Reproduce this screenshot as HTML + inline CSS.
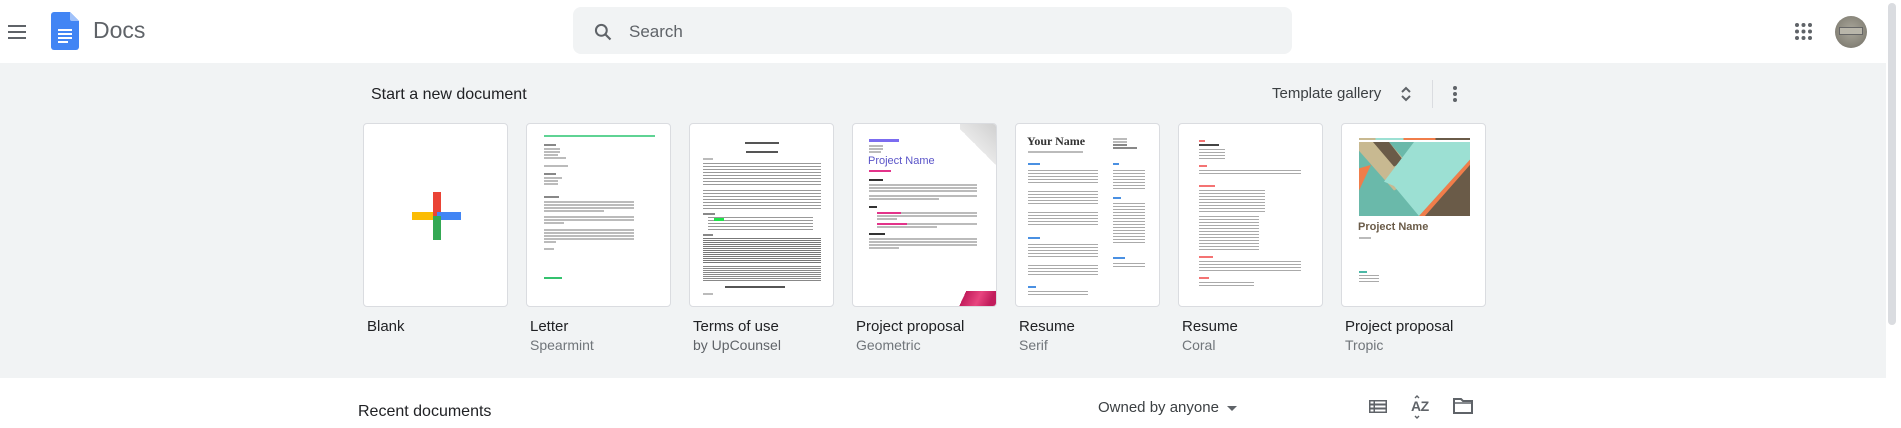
<!DOCTYPE html>
<html><head><meta charset="utf-8"><style>
*{margin:0;padding:0;box-sizing:border-box}
body{width:1901px;height:428px;overflow:hidden;background:#fff;font-family:"Liberation Sans",Arial,sans-serif;position:relative}
.a{position:absolute}
.gray{left:0;top:63px;width:1886px;height:315px;background:#f1f3f4}
.card{position:absolute;top:123px;width:145px;height:184px;background:#fff;border:1px solid #dadce0;border-radius:4px;overflow:hidden}
.t{position:absolute;top:318px;font-size:15px;color:#202124}
.s{position:absolute;top:337px;font-size:14px;color:#70757a}
.l{position:absolute;height:1.5px;background:#bbb}
.d{position:absolute;height:1.5px;background:#888}
</style></head><body>
<!-- header -->
<div class="a" style="left:8px;top:25px;width:18px;height:2px;background:#5f6368"></div>
<div class="a" style="left:8px;top:31px;width:18px;height:2px;background:#5f6368"></div>
<div class="a" style="left:8px;top:37px;width:18px;height:2px;background:#5f6368"></div>
<svg class="a" style="left:51px;top:12px" width="28" height="38" viewBox="0 0 28 38">
<path d="M3 0h16l9 9v26a3 3 0 0 1-3 3H3a3 3 0 0 1-3-3V3a3 3 0 0 1 3-3z" fill="#4285f4"/>
<path d="M19 0l9 9h-7a2 2 0 0 1-2-2z" fill="#a1c2fa"/>
<rect x="7" y="17" width="14" height="2" fill="#fff"/><rect x="7" y="21" width="14" height="2" fill="#fff"/><rect x="7" y="25" width="14" height="2" fill="#fff"/><rect x="7" y="29" width="10" height="2" fill="#fff"/>
</svg>
<div class="a" style="left:93px;top:17px;font-size:23px;color:#5f6368">Docs</div>
<div class="a" style="left:573px;top:7px;width:719px;height:47px;background:#f1f3f4;border-radius:8px"></div>
<svg class="a" style="left:593px;top:22px" width="20" height="20" viewBox="0 0 24 24"><circle cx="10" cy="10" r="6.5" fill="none" stroke="#5f6368" stroke-width="2.4"/><path d="M15 15l6 6" stroke="#5f6368" stroke-width="2.6"/></svg>
<div class="a" style="left:629px;top:22px;font-size:17px;color:#5f6368">Search</div>
<svg class="a" style="left:1795px;top:23px" width="17" height="17" viewBox="0 0 17 17" fill="#5f6368">
<circle cx="2" cy="2" r="2"/><circle cx="8.5" cy="2" r="2"/><circle cx="15" cy="2" r="2"/>
<circle cx="2" cy="8.5" r="2"/><circle cx="8.5" cy="8.5" r="2"/><circle cx="15" cy="8.5" r="2"/>
<circle cx="2" cy="15" r="2"/><circle cx="8.5" cy="15" r="2"/><circle cx="15" cy="15" r="2"/></svg>
<div class="a" style="left:1835px;top:16px;width:32px;height:32px;border-radius:50%;background:radial-gradient(circle at 50% 45%,#a9a69a,#8a877c 60%,#6e6b62)"></div>
<div class="a" style="left:1839px;top:27px;width:24px;height:8px;background:#b9b6aa;border:1px solid #666"></div>
<!-- gray section -->
<div class="a gray"></div>
<div class="a" style="left:1888px;top:3px;width:8px;height:322px;background:#dadce0;border-radius:4px"></div>
<div class="a" style="left:371px;top:86px;font-size:16px;color:#202124">Start a new document</div>
<div class="a" style="left:1272px;top:85px;font-size:15px;color:#3c4043">Template gallery</div>
<svg class="a" style="left:1400px;top:85px" width="12" height="18" viewBox="0 0 12 18"><path d="M2 7l4-4 4 4M2 11l4 4 4-4" fill="none" stroke="#5f6368" stroke-width="2"/></svg>
<div class="a" style="left:1432px;top:80px;width:1px;height:28px;background:#dadce0"></div>
<div class="a" style="left:1453px;top:86px;width:4px;height:4px;border-radius:50%;background:#5f6368;box-shadow:0 6px 0 #5f6368,0 12px 0 #5f6368"></div>

<!-- Blank -->
<div class="card" style="left:363px">
<div class="a" style="left:48px;top:88px;width:24px;height:8px;background:#fbbc04"></div>
<div class="a" style="left:69px;top:68px;width:8px;height:24px;background:#ea4335"></div>
<div class="a" style="left:73px;top:88px;width:24px;height:8px;background:#4285f4"></div>
<div class="a" style="left:69px;top:92px;width:8px;height:24px;background:#34a853"></div>
</div>
<!-- Letter -->
<div class="card" style="left:526px">
<div class="a" style="left:17px;top:11px;width:111px;height:2px;background:#5fd394"></div>
<div class="d" style="left:17px;top:20px;width:12px"></div>
<div class="l" style="left:17px;top:24px;width:16px"></div><div class="l" style="left:17px;top:27px;width:16px"></div><div class="l" style="left:17px;top:30px;width:14px"></div><div class="l" style="left:17px;top:33px;width:22px"></div>
<div class="l" style="left:17px;top:41px;width:24px"></div>
<div class="d" style="left:17px;top:49px;width:12px"></div>
<div class="l" style="left:17px;top:53px;width:18px"></div><div class="l" style="left:17px;top:56px;width:14px"></div><div class="l" style="left:17px;top:59px;width:14px"></div>
<div class="d" style="left:17px;top:72px;width:15px"></div>
<div class="l" style="left:17px;top:77px;width:90px"></div><div class="l" style="left:17px;top:80px;width:90px"></div><div class="l" style="left:17px;top:83px;width:90px"></div><div class="l" style="left:17px;top:86px;width:60px"></div>
<div class="l" style="left:17px;top:92px;width:90px"></div><div class="l" style="left:17px;top:95px;width:90px"></div><div class="l" style="left:17px;top:98px;width:20px"></div>
<div class="l" style="left:17px;top:105px;width:90px"></div><div class="l" style="left:17px;top:108px;width:90px"></div><div class="l" style="left:17px;top:111px;width:90px"></div><div class="l" style="left:17px;top:114px;width:90px"></div><div class="l" style="left:17px;top:117px;width:12px"></div>
<div class="l" style="left:17px;top:124px;width:10px"></div>
<div class="a" style="left:17px;top:153px;width:18px;height:2px;background:#34c26e"></div>
</div>
<!-- Terms -->
<div class="card" style="left:689px">
<div class="d" style="left:55px;top:18px;width:34px;background:#555"></div>
<div class="d" style="left:56px;top:27px;width:32px;background:#555"></div>
<div class="l" style="left:13px;top:34px;width:10px"></div>
<div class="a" style="left:13px;top:39px;width:118px;height:24px;background:repeating-linear-gradient(#999 0 1px,transparent 1px 3px)"></div>
<div class="a" style="left:13px;top:66px;width:118px;height:20px;background:repeating-linear-gradient(#999 0 1px,transparent 1px 3px)"></div>
<div class="d" style="left:13px;top:89px;width:12px"></div>
<div class="a" style="left:18px;top:93px;width:105px;height:13px;background:repeating-linear-gradient(#999 0 1px,transparent 1px 3px)"></div>
<div class="a" style="left:24px;top:94px;width:10px;height:3px;background:#1fe34a"></div>
<div class="d" style="left:13px;top:110px;width:10px"></div>
<div class="a" style="left:13px;top:114px;width:118px;height:26px;background:repeating-linear-gradient(#777 0 1px,transparent 1px 2px)"></div>
<div class="a" style="left:13px;top:142px;width:118px;height:16px;background:repeating-linear-gradient(#888 0 1px,transparent 1px 2px)"></div>
<div class="d" style="left:35px;top:162px;width:60px;background:#555"></div>
<div class="l" style="left:13px;top:169px;width:10px"></div>
</div>
<!-- Project proposal geometric -->
<div class="card" style="left:852px">
<div class="a" style="right:0;top:0;width:36px;height:46px;background:linear-gradient(225deg,#d0d0d0 0,#e8e8e8 50%,transparent 50%)"></div>
<div class="d" style="left:16px;top:15px;width:30px;height:2.5px;background:#7b6cf0"></div>
<div class="l" style="left:16px;top:21px;width:14px"></div><div class="l" style="left:16px;top:24px;width:14px"></div><div class="l" style="left:16px;top:27px;width:12px"></div>
<div class="a" style="left:15px;top:31px;font-size:11px;color:#5a54c8">Project Name</div>
<div class="l" style="left:16px;top:46px;width:22px;background:#e3338a"></div>
<div class="d" style="left:16px;top:55px;width:14px;background:#333"></div>
<div class="l" style="left:16px;top:60px;width:108px"></div><div class="l" style="left:16px;top:63px;width:108px"></div><div class="l" style="left:16px;top:66px;width:108px"></div>
<div class="l" style="left:16px;top:71px;width:108px"></div><div class="l" style="left:16px;top:74px;width:70px"></div>
<div class="d" style="left:16px;top:82px;width:8px;background:#333"></div>
<div class="l" style="left:24px;top:88px;width:100px"></div><div class="l" style="left:24px;top:91px;width:100px"></div><div class="l" style="left:24px;top:94px;width:20px"></div>
<div class="l" style="left:24px;top:99px;width:100px"></div><div class="l" style="left:24px;top:102px;width:60px"></div>
<div class="l" style="left:24px;top:88px;width:24px;background:#e3338a"></div><div class="l" style="left:24px;top:99px;width:30px;background:#e3338a"></div>
<div class="d" style="left:16px;top:109px;width:16px;background:#333"></div>
<div class="l" style="left:16px;top:114px;width:108px"></div><div class="l" style="left:16px;top:117px;width:108px"></div><div class="l" style="left:16px;top:120px;width:108px"></div><div class="l" style="left:16px;top:123px;width:30px"></div>
<div class="a" style="left:100px;top:167px;width:45px;height:17px;background:linear-gradient(115deg,transparent 25%,#c21d5c 25%,#e8457f 55%,#c21d5c 80%)"></div>
<div class="a" style="left:0;top:182px;width:145px;height:2px;background:#5a54c8"></div>
</div>
<!-- Resume Serif -->
<div class="card" style="left:1015px">
<div class="a" style="left:11px;top:10px;font-family:'Liberation Serif',serif;font-size:12px;font-weight:bold;color:#333">Your Name</div>
<div class="l" style="left:12px;top:27px;width:55px"></div>
<div class="l" style="left:97px;top:14px;width:14px"></div><div class="l" style="left:97px;top:17px;width:14px"></div><div class="d" style="left:97px;top:20px;width:14px"></div><div class="d" style="left:97px;top:23px;width:24px"></div>
<div class="l" style="left:12px;top:39px;width:12px;background:#4a90e2"></div><div class="l" style="left:97px;top:39px;width:6px;background:#4a90e2"></div>
<div class="a" style="left:12px;top:46px;width:70px;height:14px;background:repeating-linear-gradient(#aaa 0 1px,transparent 1px 3px)"></div>
<div class="a" style="left:12px;top:67px;width:70px;height:14px;background:repeating-linear-gradient(#aaa 0 1px,transparent 1px 3px)"></div>
<div class="a" style="left:12px;top:88px;width:70px;height:14px;background:repeating-linear-gradient(#aaa 0 1px,transparent 1px 3px)"></div>
<div class="l" style="left:12px;top:113px;width:12px;background:#4a90e2"></div>
<div class="a" style="left:12px;top:120px;width:70px;height:14px;background:repeating-linear-gradient(#aaa 0 1px,transparent 1px 3px)"></div>
<div class="a" style="left:12px;top:141px;width:70px;height:10px;background:repeating-linear-gradient(#aaa 0 1px,transparent 1px 3px)"></div>
<div class="l" style="left:12px;top:162px;width:8px;background:#4a90e2"></div>
<div class="a" style="left:12px;top:167px;width:60px;height:6px;background:repeating-linear-gradient(#aaa 0 1px,transparent 1px 3px)"></div>
<div class="a" style="left:97px;top:46px;width:32px;height:20px;background:repeating-linear-gradient(#aaa 0 1px,transparent 1px 3px)"></div>
<div class="l" style="left:97px;top:73px;width:8px;background:#4a90e2"></div>
<div class="a" style="left:97px;top:79px;width:32px;height:40px;background:repeating-linear-gradient(#aaa 0 1px,transparent 1px 3px)"></div>
<div class="l" style="left:97px;top:133px;width:12px;background:#4a90e2"></div>
<div class="a" style="left:97px;top:139px;width:32px;height:6px;background:repeating-linear-gradient(#aaa 0 1px,transparent 1px 3px)"></div>
</div>
<!-- Resume Coral -->
<div class="card" style="left:1178px">
<div class="l" style="left:20px;top:16px;width:6px;background:#f47373"></div>
<div class="d" style="left:20px;top:20px;width:20px;background:#444"></div>
<div class="a" style="left:20px;top:25px;width:26px;height:10px;background:repeating-linear-gradient(#aaa 0 1px,transparent 1px 3px)"></div>
<div class="l" style="left:20px;top:41px;width:8px;background:#f47373"></div>
<div class="a" style="left:20px;top:46px;width:102px;height:5px;background:repeating-linear-gradient(#aaa 0 1px,transparent 1px 3px)"></div>
<div class="l" style="left:20px;top:61px;width:16px;background:#f47373"></div>
<div class="a" style="left:20px;top:66px;width:66px;height:24px;background:repeating-linear-gradient(#aaa 0 1px,transparent 1px 3px)"></div>
<div class="a" style="left:20px;top:92px;width:60px;height:16px;background:repeating-linear-gradient(#aaa 0 1px,transparent 1px 3px)"></div>
<div class="a" style="left:20px;top:110px;width:60px;height:16px;background:repeating-linear-gradient(#aaa 0 1px,transparent 1px 3px)"></div>
<div class="l" style="left:20px;top:132px;width:14px;background:#f47373"></div>
<div class="a" style="left:20px;top:137px;width:102px;height:10px;background:repeating-linear-gradient(#aaa 0 1px,transparent 1px 3px)"></div>
<div class="l" style="left:20px;top:153px;width:10px;background:#f47373"></div>
<div class="a" style="left:20px;top:158px;width:55px;height:5px;background:repeating-linear-gradient(#aaa 0 1px,transparent 1px 3px)"></div>
</div>
<!-- Project proposal tropic -->
<div class="card" style="left:1341px">
<div class="a" style="left:17px;top:14px;width:111px;height:2px;background:linear-gradient(90deg,#c8b991 0 15%,#9ce0d3 15% 40%,#f07d4a 40% 69%,#6a5b48 69%)"></div>
<svg class="a" style="left:17px;top:18px" width="111" height="74" viewBox="0 0 111 84" preserveAspectRatio="none">
<rect width="111" height="84" fill="#6ab9aa"/>
<polygon points="0,0 30,0 60,40 35,55 0,10" fill="#c8b991"/>
<polygon points="14,0 30,0 45,22 35,28" fill="#6a5b48"/>
<polygon points="55,0 111,0 111,20 60,84 35,50 25,45" fill="#9ce0d3"/>
<polygon points="111,20 111,84 60,84" fill="#f07d4a"/>
<polygon points="111,26 111,84 66,84" fill="#6a5b48"/>
<polygon points="0,30 12,26 0,55" fill="#f07d4a"/>
</svg>
<div class="a" style="left:16px;top:97px;font-size:11px;font-weight:bold;color:#6a5b48">Project Name</div>
<div class="l" style="left:17px;top:113px;width:12px"></div>
<div class="l" style="left:17px;top:147px;width:8px;background:#4bb8a6"></div>
<div class="a" style="left:17px;top:151px;width:20px;height:8px;background:repeating-linear-gradient(#aaa 0 1px,transparent 1px 3px)"></div>
</div>

<div class="t" style="left:367px">Blank</div>
<div class="t" style="left:530px">Letter</div><div class="s" style="left:530px">Spearmint</div>
<div class="t" style="left:693px">Terms of use</div><div class="s" style="left:693px;color:#5f6368">by UpCounsel</div>
<div class="t" style="left:856px">Project proposal</div><div class="s" style="left:856px">Geometric</div>
<div class="t" style="left:1019px">Resume</div><div class="s" style="left:1019px">Serif</div>
<div class="t" style="left:1182px">Resume</div><div class="s" style="left:1182px">Coral</div>
<div class="t" style="left:1345px">Project proposal</div><div class="s" style="left:1345px">Tropic</div>

<!-- recent -->
<div class="a" style="left:358px;top:403px;font-size:16px;color:#202124">Recent documents</div>
<div class="a" style="left:1098px;top:399px;font-size:15px;color:#3c4043">Owned by anyone</div>
<div class="a" style="left:1227px;top:406px;width:0;height:0;border-left:5px solid transparent;border-right:5px solid transparent;border-top:5px solid #5f6368"></div>
<svg class="a" style="left:1369px;top:400px" width="18" height="13" viewBox="0 0 18 13"><rect width="18" height="13" fill="#5f6368"/><rect x="1.5" y="1.5" width="3" height="2" fill="#fff"/><rect x="6" y="1.5" width="10.5" height="2" fill="#fff"/><rect x="1.5" y="5.5" width="3" height="2" fill="#fff"/><rect x="6" y="5.5" width="10.5" height="2" fill="#fff"/><rect x="1.5" y="9.5" width="3" height="2" fill="#fff"/><rect x="6" y="9.5" width="10.5" height="2" fill="#fff"/></svg>
<div class="a" style="left:1411px;top:398px;font-size:14px;font-weight:bold;color:#5f6368;letter-spacing:-0.5px">AZ</div>
<svg class="a" style="left:1412px;top:395px" width="10" height="24" viewBox="0 0 10 24"><path d="M3 3l2-2 2 2M3 21l2 2 2-2" fill="none" stroke="#5f6368" stroke-width="1.4"/></svg>
<svg class="a" style="left:1453px;top:398px" width="20" height="16" viewBox="0 0 20 16"><path d="M1 1h7l2 2h9v12H1z" fill="none" stroke="#5f6368" stroke-width="2"/><path d="M1 5h18" stroke="#5f6368" stroke-width="1.5"/></svg>
</body></html>
